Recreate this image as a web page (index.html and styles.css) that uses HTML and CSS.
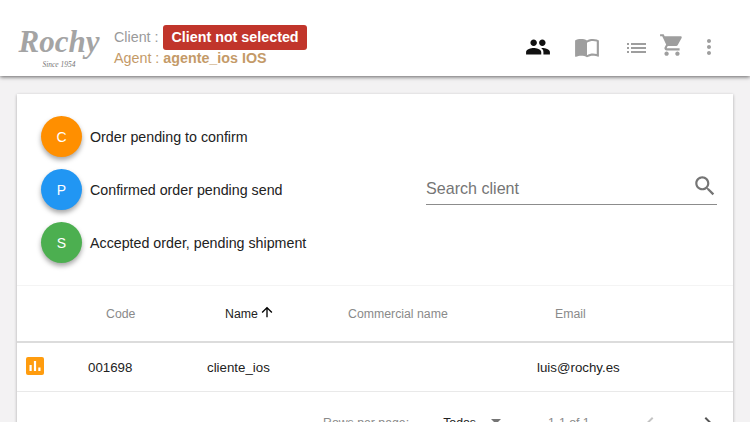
FILE: index.html
```html
<!DOCTYPE html>
<html lang="en">
<head>
  <meta charset="UTF-8">
  <title>Clients</title>
  <link rel="stylesheet" href="styles.css">
</head>
<body>

  <header class="topbar">
    <div class="logo">
      <span class="logo-name">Rochy</span>
      <span class="logo-since">Since 1954</span>
    </div>
    <div class="session">
      <div class="session-client">Client : <span class="badge">Client not selected</span></div>
      <div class="session-agent">Agent : <b>agente_ios IOS</b></div>
    </div>
    <nav class="nav">
      <svg class="nav-people" viewBox="0 0 24 24" width="26" height="26"><path d="M16 11c1.66 0 2.99-1.34 2.99-3S17.66 5 16 5c-1.66 0-3 1.34-3 3s1.34 3 3 3zm-8 0c1.66 0 2.99-1.34 2.99-3S9.66 5 8 5C6.34 5 5 6.34 5 8s1.34 3 3 3zm0 2c-2.33 0-7 1.17-7 3.5V19h14v-2.5c0-2.33-4.67-3.5-7-3.5zm8 0c-.29 0-.62.02-.97.05 1.16.84 1.97 1.97 1.97 3.45V19h6v-2.5c0-2.33-4.67-3.5-7-3.5z"/></svg>
      <svg class="nav-book" viewBox="0 0 24 24" width="26" height="26"><path d="M21 5c-1.11-.35-2.33-.5-3.5-.5-1.95 0-4.05.4-5.5 1.5-1.45-1.1-3.55-1.5-5.5-1.5S2.45 4.9 1 6v14.65c0 .25.25.5.5.5.1 0 .15-.05.25-.05C3.1 20.45 5.05 20 6.5 20c1.95 0 4.05.4 5.5 1.5 1.35-.85 3.8-1.5 5.5-1.5 1.65 0 3.35.3 4.75 1.05.1.05.15.05.25.05.25 0 .5-.25.5-.5V6c-.6-.45-1.25-.75-2-1zm0 13.5c-1.1-.35-2.3-.5-3.5-.5-1.7 0-4.15.65-5.5 1.5V8c1.35-.85 3.8-1.5 5.5-1.5 1.2 0 2.4.15 3.5.5v11.5z"/></svg>
      <svg class="nav-list" viewBox="0 0 24 24" width="24" height="24"><path d="M3 14h2v-2H3v2zm0 4h2v-2H3v2zm0-8h2V8H3v2zm4 4h15v-2H7v2zm0 4h15v-2H7v2zM7 8v2h15V8H7z"/></svg>
      <svg class="nav-cart" viewBox="0 0 24 24" width="26" height="26"><path d="M7 18c-1.1 0-1.99.9-1.99 2S5.9 22 7 22s2-.9 2-2-.9-2-2-2zM1 2v2h2l3.6 7.59-1.35 2.45c-.16.28-.25.61-.25.96 0 1.1.9 2 2 2h12v-2H7.42c-.14 0-.25-.11-.25-.25l.03-.12.9-1.63h7.45c.75 0 1.41-.41 1.75-1.03l3.58-6.49c.08-.14.12-.31.12-.48 0-.55-.45-1-1-1H5.21l-.94-2H1zm16 16c-1.1 0-1.99.9-1.99 2s.89 2 1.99 2 2-.9 2-2-.9-2-2-2z"/></svg>
      <svg class="nav-more" viewBox="0 0 24 24" width="24" height="24"><path d="M12 8c1.1 0 2-.9 2-2s-.9-2-2-2-2 .9-2 2 .9 2 2 2zm0 2c-1.1 0-2 .9-2 2s.9 2 2 2 2-.9 2-2-.9-2-2-2zm0 6c-1.1 0-2 .9-2 2s.9 2 2 2 2-.9 2-2-.9-2-2-2z"/></svg>
    </nav>
  </header>

  <main class="card">
    <section class="filters">
      <ul class="legend">
        <li class="legend-item"><span class="dot dot-orange">C</span>Order pending to confirm</li>
        <li class="legend-item"><span class="dot dot-blue">P</span>Confirmed order pending send</li>
        <li class="legend-item"><span class="dot dot-green">S</span>Accepted order, pending shipment</li>
      </ul>
      <div class="search">
        <span>Search client</span>
        <svg viewBox="0 0 24 24" width="26" height="26"><path d="M15.5 14h-.79l-.28-.27C15.41 12.59 16 11.11 16 9.5 16 5.91 13.09 3 9.5 3S3 5.91 3 9.5 5.91 16 9.5 16c1.61 0 3.09-.59 4.23-1.57l.27.28v.79l5 4.99L20.49 19l-4.99-5zm-6 0C7.01 14 5 11.99 5 9.5S7.01 5 9.5 5 14 7.01 14 9.5 11.99 14 9.5 14z"/></svg>
      </div>
    </section>

    <section class="table">
      <div class="table-head">
        <span>Code</span>
        <span class="sorted">Name
          <svg viewBox="0 0 24 24" width="16" height="16"><path d="M4 12l1.41 1.41L11 7.83V20h2V7.83l5.58 5.59L20 12l-8-8-8 8z"/></svg>
        </span>
        <span>Commercial name</span>
        <span>Email</span>
      </div>
      <div class="table-row">
        <svg class="stats" viewBox="0 0 18 18" width="18" height="18"><rect width="18" height="18" rx="2" fill="#ff9c0e"/><path d="M3.5 8h2.2v6H3.5zM7.9 4h2.2v10H7.900zM12.300 10.500h2.200V14h-2.200z" fill="#fff"/></svg>
        <span>001698</span>
        <span>cliente_ios</span>
        <span>luis@rochy.es</span>
      </div>
      <div class="pager">
        <span class="pager-label">Rows per page:</span>
        <span class="pager-size">Todos</span>
        <span class="pager-caret"></span>
        <span class="pager-label pager-count">1-1 of 1</span>
        <svg class="pager-prev" viewBox="0 0 24 24" width="24" height="24"><path d="M15.41 7.41L14 6l-6 6 6 6 1.41-1.41L10.830 12z"/></svg>
        <svg class="pager-next" viewBox="0 0 24 24" width="24" height="24"><path d="M10 6L8.590 7.410 13.170 12l-4.580 4.590L10 18l6-6z"/></svg>
      </div>
    </section>
  </main>

</body>
</html>
```

FILE: styles.css
```css
html, body { height: 100%; }
body {
  margin: 0;
  overflow: hidden;
  background: #f3f2f3;
  color: #222;
  font-family: "Liberation Sans", Arial, sans-serif;
}

/* top bar */
.topbar {
  display: flex;
  align-items: center;
  box-sizing: border-box;
  height: 76px;
  padding-top: 18px;
  padding-left: 18px;
  background: #fff;
  box-shadow: 0 1px 4px rgba(0, 0, 0, 0.6);
}
.logo {
  display: flex;
  flex-direction: column;
  align-items: center;
  width: 82px;
  margin-right: 14px;
  color: #a4a4a4;
}
.logo-name {
  font-family: "Liberation Serif", serif;
  font-size: 31px;
  font-style: italic;
  font-weight: bold;
  line-height: 34px;
}
.logo-since {
  margin-top: 1px;
  color: #777;
  font-family: "Liberation Serif", serif;
  font-size: 7.500px;
  font-style: italic;
}
.session { margin-top: -3px; font-size: 14.300px; }
.session-client { color: #9a9a9a; }
.session-agent { color: #c49a68; }
.badge {
  display: inline-block;
  margin-left: 1px;
  padding: 0 8px;
  border-radius: 3px;
  background: #c1352b;
  color: #fff;
  font-weight: bold;
  line-height: 25px;
}
.nav {
  display: flex;
  align-items: center;
  margin-left: auto;
  padding-right: 29px;
  fill: #9e9e9e;
}
.nav-people { fill: #111; }
.nav-book { margin-left: 23px; }
.nav-list { margin-left: 24px; }
.nav-cart { margin-left: 11px; margin-top: -4px; }
.nav-more { margin-left: 12px; }

/* card */
.card {
  margin: 18px 17px 0;
  background: #fff;
  box-shadow: 0 1px 3px rgba(0, 0, 0, 0.3);
}
.filters {
  display: flex;
  align-items: center;
  justify-content: space-between;
  height: 191px;
  padding: 0 16px 0 24px;
}
.legend { margin: 0; padding: 0; list-style: none; font-size: 14.250px; }
.legend-item {
  display: flex;
  align-items: center;
  gap: 8px;
  margin-top: 12px;
}
.legend-item:first-child { margin-top: 0; }
.dot {
  display: flex;
  align-items: center;
  justify-content: center;
  width: 41px;
  height: 41px;
  border-radius: 50%;
  color: #fff;
  font-size: 14px;
  box-shadow: 0 3px 5px rgba(0, 0, 0, 0.35);
}
.dot-orange { background: #ff8f00; }
.dot-blue { background: #2196f3; }
.dot-green { background: #4caf50; }
.search {
  display: flex;
  align-items: center;
  justify-content: space-between;
  width: 291px;
  height: 36px;
  margin-bottom: 6px;
  border-bottom: 1px solid #8c8c8c;
  color: #757575;
  font-size: 16.100px;
  fill: #757575;
}
.search span { padding-top: 4px; }
.search svg { margin-right: -1px; }

/* table */
.table { border-top: 1px solid #f4f4f4; }
.table-head {
  display: grid;
  grid-template-columns: 119px 123px 207px 1fr;
  align-items: center;
  height: 55px;
  padding-left: 89px;
  border-bottom: 2px solid #dcdcdc;
  color: #8a8a8a;
  font-size: 12.300px;
}
.sorted { display: flex; align-items: center; gap: 1px; color: #222; }
.sorted svg { margin-top: -3px; }
.table-row {
  display: grid;
  grid-template-columns: 62px 119px 330px 1fr;
  align-items: center;
  height: 48px;
  padding-left: 9px;
  border-bottom: 1px solid #e9e9e9;
  font-size: 13.300px;
}
.stats { margin-top: -3px; }
.pager {
  display: flex;
  align-items: center;
  height: 62px;
  padding-left: 306px;
  color: #222;
  font-size: 12.300px;
}
.pager-label { color: #8a8a8a; }
.pager-size { margin-left: 34px; }
.pager-caret {
  margin-left: 15px;
  margin-top: -3px;
  border-top: 5px solid #757575;
  border-left: 5px solid transparent;
  border-right: 5px solid transparent;
}
.pager-count { margin-left: 47px; }
.pager-prev { margin-left: 48px; fill: #c4c4c4; }
.pager-next { margin-left: 34px; fill: #555; }
```
